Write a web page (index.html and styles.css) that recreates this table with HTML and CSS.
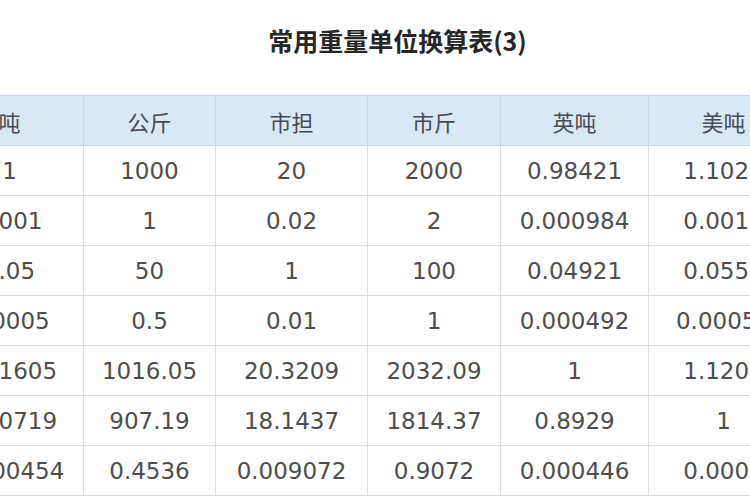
FILE: index.html
```html
<!DOCTYPE html>
<html lang="zh-CN">
<head>
<meta charset="utf-8">
<link rel="stylesheet" href="styles.css">
</head>
<body>
<div class="page">
  <h1 class="title">常用重量单位换算表(3)</h1>
  <div class="wrap">
    <table class="conv">
      <colgroup>
        <col class="c0"><col class="c1"><col class="c2"><col class="c3"><col class="c4"><col class="c5">
      </colgroup>
      <thead>
        <tr><th class="first">公吨</th><th>公斤</th><th>市担</th><th>市斤</th><th>英吨</th><th>美吨</th></tr>
      </thead>
      <tbody>
        <tr><td>1</td><td>1000</td><td>20</td><td>2000</td><td>0.98421</td><td>1.1023</td></tr>
        <tr><td>0.001</td><td>1</td><td>0.02</td><td>2</td><td>0.000984</td><td>0.0011</td></tr>
        <tr><td>0.05</td><td>50</td><td>1</td><td>100</td><td>0.04921</td><td>0.0551</td></tr>
        <tr><td>0.0005</td><td>0.5</td><td>0.01</td><td>1</td><td>0.000492</td><td>0.00055</td></tr>
        <tr><td>1.01605</td><td>1016.05</td><td>20.3209</td><td>2032.09</td><td>1</td><td>1.1200</td></tr>
        <tr><td>0.90719</td><td>907.19</td><td>18.1437</td><td>1814.37</td><td>0.8929</td><td>1</td></tr>
        <tr><td>0.000454</td><td>0.4536</td><td>0.009072</td><td>0.9072</td><td>0.000446</td><td>0.0005</td></tr>
      </tbody>
    </table>
  </div>
</div>
</body>
</html>
```
FILE: styles.css
```css
html, body {
  margin: 0;
  padding: 0;
  background: #ffffff;
}
.page {
  width: 750px;
  height: 500px;
  overflow: hidden;
}
.title {
  margin: 0;
  height: 95px;
  display: flex;
  align-items: center;
  justify-content: center;
  padding-left: 45px;
  padding-bottom: 16px;
  box-sizing: border-box;
  font-family: "Noto Sans CJK SC", "DejaVu Sans", sans-serif;
  font-weight: 700;
  font-size: 25px;
  color: #262626;
}
.wrap {
  margin-left: -65px;
}
.conv {
  border-collapse: collapse;
  table-layout: fixed;
  width: 863px;
  font-family: "DejaVu Sans", Verdana, "Noto Sans CJK SC", sans-serif;
  font-size: 23px;
  color: #4d4d4d;
}
.c0 { width: 148px; }
.c1 { width: 132px; }
.c2 { width: 152px; }
.c3 { width: 133px; }
.c4 { width: 148px; }
.c5 { width: 150px; }
.conv th,
.conv td {
  height: 49px;
  padding: 0;
  text-align: center;
  vertical-align: middle;
  border: 1px solid #d6dde3;
  white-space: nowrap;
  overflow: hidden;
}
.conv th {
  background: #d9e8f7;
  font-family: "Noto Sans CJK SC", sans-serif;
  font-weight: 400;
  font-size: 22px;
  color: #454b52;
  border-color: #c9d7e4;
}
.conv th.first {
  padding-right: 22px;
}
.conv td {
  background: #ffffff;
}
```
